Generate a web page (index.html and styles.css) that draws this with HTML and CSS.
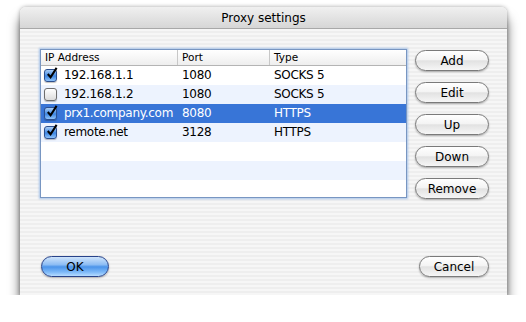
FILE: index.html
```html
<!DOCTYPE html>
<html lang="en">
<head>
  <meta charset="UTF-8">
  <title>Proxy settings</title>
  <link rel="stylesheet" href="styles.css">
</head>
<body>
  <div class="window">
    <div class="titlebar">Proxy settings</div>

    <div class="content">
      <div class="table">
        <div class="row head">
          <div class="cell">IP Address</div>
          <div class="cell">Port</div>
          <div class="cell">Type</div>
        </div>
        <div class="row">
          <div class="cell"><span class="check on"><svg viewBox="0 0 14 14"><path d="M3 7.5 L6 11 L12.5 1" /></svg></span>192.168.1.1</div>
          <div class="cell">1080</div>
          <div class="cell">SOCKS 5</div>
        </div>
        <div class="row alt">
          <div class="cell"><span class="check"></span>192.168.1.2</div>
          <div class="cell">1080</div>
          <div class="cell">SOCKS 5</div>
        </div>
        <div class="row selected">
          <div class="cell"><span class="check on"><svg viewBox="0 0 14 14"><path d="M3 7.5 L6 11 L12.5 1" /></svg></span>prx1.company.com</div>
          <div class="cell">8080</div>
          <div class="cell">HTTPS</div>
        </div>
        <div class="row alt">
          <div class="cell"><span class="check on"><svg viewBox="0 0 14 14"><path d="M3 7.5 L6 11 L12.5 1" /></svg></span>remote.net</div>
          <div class="cell">3128</div>
          <div class="cell">HTTPS</div>
        </div>
        <div class="row"></div>
        <div class="row alt"></div>
        <div class="row"></div>
      </div>

      <div class="buttons">
        <button class="btn">Add</button>
        <button class="btn">Edit</button>
        <button class="btn">Up</button>
        <button class="btn">Down</button>
        <button class="btn">Remove</button>
      </div>
    </div>

    <div class="footer">
      <button class="btn default">OK</button>
      <button class="btn cancel">Cancel</button>
    </div>
  </div>
</body>
</html>
```

FILE: styles.css
```css
body {
  margin: 0;
  padding: 7px 0 0 20px;
  background-color: #fff;
  font-family: "DejaVu Sans", Verdana, sans-serif;
  color: #000;
}

.window {
  width: 487px;
  height: 288px;
  display: flex;
  flex-direction: column;
  border-radius: 6px 6px 0 0;
  background: repeating-linear-gradient(#eeeeee 0, #eeeeee 2px, #f6f6f6 2px, #f6f6f6 4px);
  box-shadow: 0 11px 12px rgba(0, 0, 0, 0.6), 0 0 4px rgba(0, 0, 0, 0.35);
}

.titlebar {
  height: 21px;
  line-height: 22px;
  text-align: center;
  font-size: 12px;
  border-radius: 6px 6px 0 0;
  border-bottom: 1px solid #a8a8a8;
  background: linear-gradient(#f0f0f0, #d6d6d6);
}

.content {
  display: flex;
  gap: 8px;
  padding: 20px 18px 0 20px;
}

.table {
  width: 365px;
  height: 147px;
  overflow: hidden;
  background-color: #fff;
  border: 1px solid #7896c2;
  box-shadow: 0 0 2px 1px #a8c4e8;
  font-size: 12px;
  letter-spacing: -0.3px;
}

.row {
  display: grid;
  grid-template-columns: 137px 92px 1fr;
  height: 19px;
  line-height: 19px;
}

.row.alt {
  background-color: #edf3fe;
}

.row.selected {
  background-color: #3875d7;
  color: #fff;
}

.cell {
  display: flex;
  align-items: center;
  padding-left: 4px;
  white-space: nowrap;
}

.row.head {
  height: 15px;
  line-height: 15px;
  font-size: 10.5px;
  letter-spacing: 0;
  border-bottom: 1px solid #b4b4b4;
  background: linear-gradient(#ffffff, #eeeeee);
}

.row.head .cell {
  border-right: 1px solid #c8c8c8;
}

.row.head .cell:last-child {
  border-right: none;
}

.check {
  position: relative;
  width: 11px;
  height: 11px;
  margin: 0 7px 0 -1px;
  border: 1px solid #6d6d6d;
  border-radius: 3px;
  background: linear-gradient(#ffffff, #dcdcdc);
  box-shadow: 0 1px 1px rgba(0, 0, 0, 0.25);
}

.check.on {
  border-color: #2c4f8e;
  background: linear-gradient(#a9cdf6, #3d86e2 55%, #8ec3fb);
}

.check svg {
  position: absolute;
  left: 0;
  top: -3px;
  width: 13px;
  height: 13px;
}

.check svg path {
  fill: none;
  stroke: #000;
  stroke-width: 2.2;
}

.buttons {
  display: flex;
  flex-direction: column;
  gap: 11px;
  padding-top: 1px;
}

.btn {
  width: 74px;
  height: 21px;
  padding: 0;
  font-family: "DejaVu Sans", Verdana, sans-serif;
  font-size: 12px;
  color: #000;
  border: 1px solid #7a7a7a;
  border-radius: 11px;
  background: linear-gradient(#ffffff 0%, #f4f4f4 45%, #e2e2e2 52%, #f6f6f6 100%);
  box-shadow: 0 1px 2px rgba(0, 0, 0, 0.3);
}

.footer {
  margin-top: auto;
  display: flex;
  justify-content: space-between;
  padding: 0 18px 18px 21px;
}

.btn.default {
  width: 68px;
  border-color: #28438a;
  background: linear-gradient(#cfe4fb 0%, #8dbdf4 40%, #4b94ea 52%, #7fbaf8 80%, #b6dcff 100%);
}

.btn.cancel {
  width: 70px;
}
```
